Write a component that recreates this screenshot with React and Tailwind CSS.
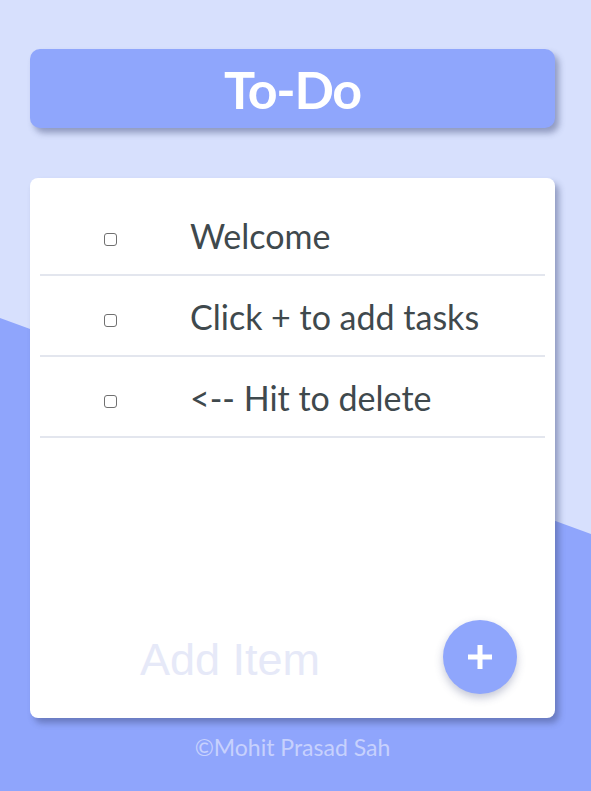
import React from "react";

const tasks = ["Welcome", "Click + to add tasks", "<-- Hit to delete"];

const App = () => {
  return (
    <div className="relative w-[591px] h-[791px] overflow-hidden bg-[#d7e0fd]">
      {/* background wedge */}
      <svg
        className="absolute inset-0"
        width="591"
        height="791"
        viewBox="0 0 591 791"
      >
        <polygon points="0,318 591,534 591,791 0,791" fill="#8fa5fc" />
      </svg>

      <div className="relative flex flex-col pl-[30px] pr-[36px] pt-[49px]">
        <div className="h-[79px] rounded-[10px] bg-[#8fa6fc] shadow-[4px_5px_6px_rgba(60,70,120,0.45)] flex items-center justify-center">
          <h1 className="text-white font-bold text-[52px] leading-none font-['Lato',sans-serif] tracking-tight">
            To-Do
          </h1>
        </div>

        <div className="mt-[50px] h-[540px] rounded-[8px] bg-white shadow-[4px_5px_6px_rgba(60,70,120,0.45)] flex flex-col px-[10px] pt-[17px] pb-[24px]">
          <ul className="flex flex-col">
            {tasks.map((task, index) => (
              <li
                key={index}
                className="h-[81px] flex items-center border-b-2 border-[#e3e6ee]"
              >
                <div className="w-[150px] flex justify-center pr-[10px]">
                  <span className="block w-[13px] h-[13px] mt-[10px] rounded-[3px] border border-[#707070] bg-white" />
                </div>
                <span className="text-[34px] text-[#3f494d] font-['Lato',sans-serif] mt-[2px]">
                  {task}
                </span>
              </li>
            ))}
          </ul>

          <div className="mt-auto flex items-center justify-between pl-[100px] pr-[28px]">
            <span className="text-[45px] text-[#e6e9f8] font-['Liberation_Sans',sans-serif] mt-[6px]">
              Add Item
            </span>
            <button className="w-[74px] h-[74px] rounded-full bg-[#8fa6fc] shadow-[0_4px_8px_rgba(60,70,120,0.3)] flex items-center justify-center">
              <svg width="30" height="30" viewBox="0 0 30 30">
                <path
                  d="M15 3v24M3 15h24"
                  stroke="white"
                  strokeWidth="5"
                  strokeLinecap="butt"
                />
              </svg>
            </button>
          </div>
        </div>

        <p className="mt-[12px] text-center text-[23px] text-[#c7d1fd] font-['Lato',sans-serif]">
          ©Mohit Prasad Sah
        </p>
      </div>
    </div>
  );
};

export default App;
